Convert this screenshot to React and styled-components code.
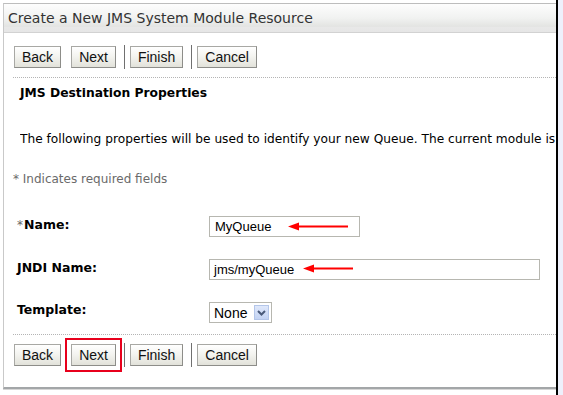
import React from 'react';
import styled, { createGlobalStyle } from 'styled-components';

const GlobalStyle = createGlobalStyle`
  html, body {
    margin: 0;
    padding: 0;
    background: #ffffff;
    font-family: Tahoma, "DejaVu Sans", sans-serif;
  }
`;

const Screen = styled.div`
  display: flex;
  width: 563px;
  height: 395px;
  overflow: hidden;
`;

const Viewport = styled.div`
  width: 553px;
  padding: 3px 0 0 3px;
  border-right: 2px solid #000;
  background: #fff;
`;

const Gutter = styled.div`
  flex: 1;
  background: #eef0fb;
`;

const Panel = styled.div`
  border-left: 1px solid #c9c9c9;
  border-top: 1px solid #bdbdbd;
  border-bottom: 2px solid #a3a6a8;
  box-shadow: 0 1px 0 #d6d6d6;
  height: 386px;
  box-sizing: border-box;
`;

const Header = styled.div`
  height: 28px;
  padding-left: 4px;
  display: flex;
  align-items: center;
  background: linear-gradient(#fdfdfd 0%, #f1f2f1 50%, #e3e4e2 80%, #e8e8e8 82%, #e6e6e6 100%);
  border-bottom: 1px solid #d2d2d2;
  font-family: "DejaVu Sans", sans-serif;
  font-size: 14px;
  color: #333;
  white-space: nowrap;
  overflow: hidden;
`;

const Toolbar = styled.div`
  display: flex;
  align-items: center;
  padding: ${p => p.$top}px 0 ${p => p.$bottom}px 10px;
`;

const Button = styled.button`
  height: 22px;
  padding: 0 ${p => p.$pad || 7}px;
  margin-right: ${p => p.$gap || 0}px;
  border: 1px solid #a8a8a4;
  border-right-color: #8d8d89;
  border-bottom-color: #8d8d89;
  border-radius: 0;
  background: linear-gradient(#ffffff, #f4f4f0 45%, #e2e2da);
  font-family: "Liberation Sans", Arial, sans-serif;
  font-size: 14px;
  color: #111;
  outline: ${p => (p.$marked ? '2px solid #e8001c' : 'none')};
  outline-offset: 4px;
`;

const Separator = styled.span`
  width: 1px;
  height: 24px;
  background: #707070;
  margin: 0 5px 0 8px;
`;

const Dotted = styled.div`
  margin-left: 9px;
  border-top: 1px dotted #b4b4b4;
`;

const Body = styled.div`
  padding: 0 0 0 16px;
  font-family: "DejaVu Sans", sans-serif;
  font-size: 12px;
  color: #000;
`;

const SectionTitle = styled.div`
  margin-top: 7px;
  height: 16px;
  line-height: 16px;
  font-weight: bold;
  font-size: 12.3px;
`;

const Intro = styled.div`
  margin-top: 30px;
  height: 16px;
  line-height: 16px;
  white-space: nowrap;
  overflow: hidden;
  font-size: 12.2px;
`;

const Note = styled.div`
  margin: 24px 0 0 -7px;
  height: 16px;
  line-height: 16px;
  color: #6a6a6a;
  font-size: 12px;
`;

const Form = styled.div`
  margin: 29px 0 11px -3px;
  display: grid;
  grid-template-columns: 192px 1fr;
  row-gap: 22px;
  align-items: center;
`;

const Label = styled.div`
  font-weight: bold;
  font-size: 12.5px;
  height: 21px;
  line-height: 21px;
  margin-top: ${p => (p.$shift ? -6 : -4)}px;
`;

const Star = styled.span`
  font-weight: normal;
  color: #666;
  font-size: 12px;
  margin-right: 1px;
`;

const FieldWrap = styled.div`
  position: relative;
  height: 21px;
`;

const TextBox = styled.div`
  width: ${p => p.$w}px;
  height: 21px;
  box-sizing: border-box;
  border: 1px solid #b7b7b0;
  padding-left: ${p => p.$pl || 5}px;
  line-height: 19px;
  font-family: "Liberation Sans", Arial, sans-serif;
  font-size: 13px;
  background: #fff;
`;

const Arrow = styled.svg`
  position: absolute;
  top: ${p => p.$top}px;
  left: ${p => p.$left}px;
`;

const Select = styled.div`
  width: 63px;
  height: 21px;
  box-sizing: border-box;
  border: 1px solid #b7b7b0;
  display: flex;
  align-items: center;
  justify-content: space-between;
  padding: 0 2px 0 4px;
  font-family: "Liberation Sans", Arial, sans-serif;
  font-size: 14px;
`;

const DropButton = styled.span`
  width: 15px;
  height: 15px;
  box-sizing: border-box;
  border: 1px solid #b4c6e9;
  background: linear-gradient(#dfe8fb, #c3d3f3);
  display: flex;
  align-items: center;
  justify-content: center;
`;

const RedArrow = ({ width, top, left }) => (
  <Arrow $top={top} $left={left} width={width} height={9} viewBox={`0 0 ${width} 9`}>
    <polygon points="0,4.5 11,0.5 11,8.5" fill="#ff0000" />
    <rect x="9" y="3.5" width={width - 9} height="2" fill="#ff0000" />
  </Arrow>
);

const Buttons = ({ top, bottom, marked }) => (
  <Toolbar $top={top} $bottom={bottom}>
    <Button $gap={10}>Back</Button>
    <Button $marked={marked}>Next</Button>
    <Separator />
    <Button>Finish</Button>
    <Separator />
    <Button>Cancel</Button>
  </Toolbar>
);

export default function App() {
  return (
    <>
      <GlobalStyle />
      <Screen>
        <Viewport>
          <Panel>
            <Header>Create a New JMS System Module Resource</Header>
            <Buttons top={12} bottom={8} />
            <Dotted />
            <Body>
              <SectionTitle>JMS Destination Properties</SectionTitle>
              <Intro>
                The following properties will be used to identify your new Queue. The current module is MySystemModule.
              </Intro>
              <Note>* Indicates required fields</Note>
              <Form>
                <Label><Star>*</Star>Name:</Label>
                <FieldWrap>
                  <TextBox $w={151}>MyQueue</TextBox>
                  <RedArrow width={60} top={6} left={79} />
                </FieldWrap>
                <Label>JNDI Name:</Label>
                <FieldWrap>
                  <TextBox $w={331} $pl={4}>jms/myQueue</TextBox>
                  <RedArrow width={50} top={5} left={94} />
                </FieldWrap>
                <Label $shift>Template:</Label>
                <FieldWrap>
                  <Select>
                    None
                    <DropButton>
                      <svg width="9" height="6" viewBox="0 0 9 6">
                        <path d="M1 1 L4.5 4.5 L8 1" stroke="#4a5a7a" strokeWidth="2" fill="none" />
                      </svg>
                    </DropButton>
                  </Select>
                </FieldWrap>
              </Form>
            </Body>
            <Dotted />
            <Buttons top={8} bottom={0} marked />
          </Panel>
        </Viewport>
        <Gutter />
      </Screen>
    </>
  );
}
